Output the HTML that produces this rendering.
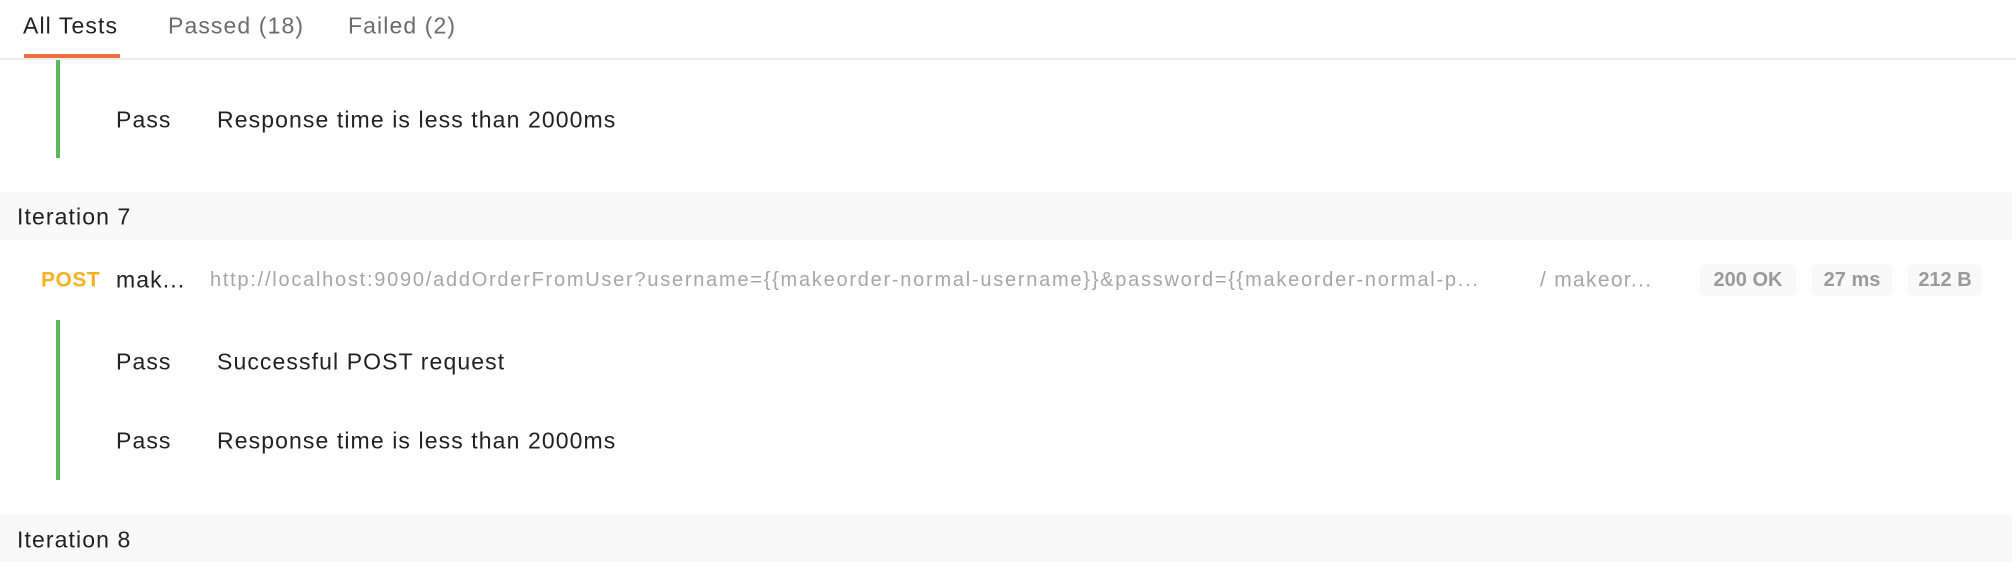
<!DOCTYPE html>
<html><head><meta charset="utf-8"><style>
body{margin:0;width:2016px;height:568px;background:#fff;font-family:"Liberation Sans",sans-serif;color:#212121;position:relative;overflow:hidden}
.a{position:absolute;white-space:nowrap;line-height:1;transform:translateY(-50%)}
.t{font-size:23px;letter-spacing:1.1px}
.g{position:absolute;background:#5cb85c;width:4px;left:56px}
.band{position:absolute;left:0;width:2012px;height:48px;background:#f9f9f9}
.b{position:absolute;top:264px;height:32px;background:#f9f9f9;border-radius:6px;color:#9a9a9a;font-size:20px;font-weight:bold;line-height:32px;text-align:center}
</style></head><body>
<div class="a t" style="left:23px;top:26px;color:#212121">All Tests</div>
<div class="a t" style="left:168px;top:26px;color:#6b6b6b">Passed (18)</div>
<div class="a t" style="left:348px;top:26px;color:#6b6b6b">Failed (2)</div>
<div style="position:absolute;left:0;top:58px;width:2016px;height:2px;background:#ececec"></div>
<div style="position:absolute;left:24px;top:54px;width:96px;height:4px;background:#f26b3a"></div>
<div class="g" style="top:60px;height:98px"></div>
<div class="a t" style="left:116px;top:120px">Pass</div>
<div class="a t" style="left:217px;top:120px">Response time is less than 2000ms</div>
<div class="band" style="top:192px"></div>
<div class="a t" style="left:17px;top:217px">Iteration 7</div>
<div class="a" style="left:41px;top:280px;font-size:21px;letter-spacing:0.5px;font-weight:bold;color:#f6b124">POST</div>
<div class="a t" style="left:116px;top:280px">mak...</div>
<div class="a" style="left:210px;top:280px;font-size:20px;letter-spacing:1.75px;color:#a6a6a6">http://localhost:9090/addOrderFromUser?username={{makeorder-normal-username}}&amp;password={{makeorder-normal-p...</div>
<div class="a" style="left:1540px;top:280px;font-size:21px;letter-spacing:1.3px;color:#a6a6a6">/ makeor...</div>
<div class="b" style="left:1700px;width:96px">200 OK</div>
<div class="b" style="left:1812px;width:80px">27 ms</div>
<div class="b" style="left:1908px;width:74px">212 B</div>
<div class="g" style="top:320px;height:160px"></div>
<div class="a t" style="left:116px;top:362px">Pass</div>
<div class="a t" style="left:217px;top:362px">Successful POST request</div>
<div class="a t" style="left:116px;top:441px">Pass</div>
<div class="a t" style="left:217px;top:441px">Response time is less than 2000ms</div>
<div class="band" style="top:514px"></div>
<div class="a t" style="left:17px;top:540px">Iteration 8</div>
</body></html>
